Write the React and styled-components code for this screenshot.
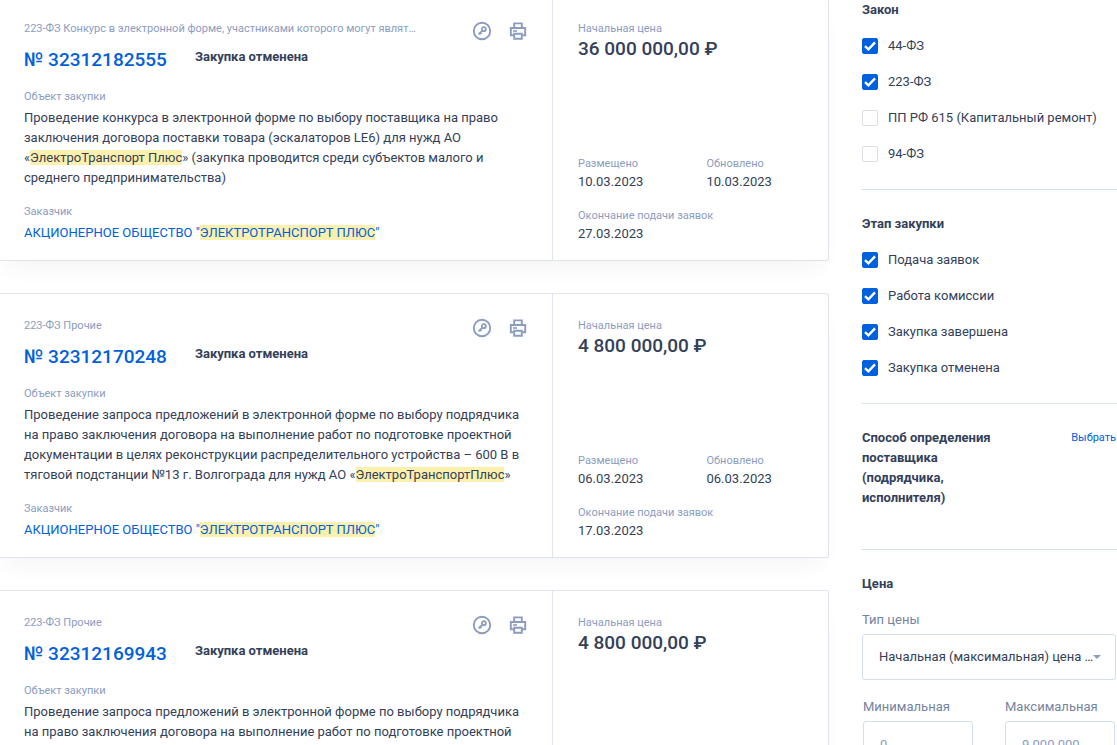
import React from 'react'
import styled, { createGlobalStyle } from 'styled-components'

const cards = [
    {
        type: '223-ФЗ Конкурс в электронной форме, участниками которого могут являться только субъекты малого предпринимательства',
        number: '32312182555',
        status: 'Закупка отменена',
        subject: ['Проведение конкурса в электронной форме по выбору поставщика на право заключения договора поставки товара (эскалаторов LE6) для нужд АО «', 'ЭлектроТранспорт Плюс', '» (закупка проводится среди субъектов малого и среднего предпринимательства)'],
        price: '36 000 000,00 ₽',
        placed: '10.03.2023',
        updated: '10.03.2023',
        deadline: '27.03.2023',
    },
    {
        type: '223-ФЗ Прочие',
        number: '32312170248',
        status: 'Закупка отменена',
        subject: ['Проведение запроса предложений в электронной форме по выбору подрядчика на право заключения договора на выполнение работ по подготовке проектной документации в целях реконструкции распределительного устройства – 600 В в тяговой подстанции №13 г. Волгограда для нужд АО «', 'ЭлектроТранспортПлюс', '»'],
        price: '4 800 000,00 ₽',
        placed: '06.03.2023',
        updated: '06.03.2023',
        deadline: '17.03.2023',
    },
    {
        type: '223-ФЗ Прочие',
        number: '32312169943',
        status: 'Закупка отменена',
        subject: ['Проведение запроса предложений в электронной форме по выбору подрядчика на право заключения договора на выполнение работ по подготовке проектной документации в целях реконструкции распределительного устройства – 600 В в тяговой подстанции №13 г. Волгограда для нужд АО «', 'ЭлектроТранспортПлюс', '»'],
        price: '4 800 000,00 ₽',
        placed: '06.03.2023',
        updated: '06.03.2023',
        deadline: '17.03.2023',
    },
]

const laws = [
    { label: '44-ФЗ', checked: true },
    { label: '223-ФЗ', checked: true },
    { label: 'ПП РФ 615 (Капитальный ремонт)', checked: false },
    { label: '94-ФЗ', checked: false },
]

const stages = [
    { label: 'Подача заявок', checked: true },
    { label: 'Работа комиссии', checked: true },
    { label: 'Закупка завершена', checked: true },
    { label: 'Закупка отменена', checked: true },
]

function KeyIcon() {
    return (
        <svg width="20" height="20" viewBox="0 0 20 20" fill="none" stroke="currentColor">
            <circle cx="10" cy="10" r="8.2" strokeWidth="1.9" />
            <circle cx="11.8" cy="8.2" r="2" strokeWidth="1.8" />
            <path d="M10.2 9.8L6.6 13.4M7.4 11.2L9.4 13.2" strokeWidth="1.8" />
        </svg>
    )
}

function PrintIcon() {
    return (
        <svg width="20" height="20" viewBox="0 0 20 20" fill="none" stroke="currentColor" strokeWidth="1.9">
            <path d="M6.2 7V2.4h7.6V7" />
            <path d="M5.7 14.2H2.8V7h14.4v7.2h-2.9" />
            <path d="M6.2 12.8h7.6v4.9H6.2z" />
            <path d="M5 10h4" strokeWidth="1.6" />
        </svg>
    )
}

function PurchaseCard({ card }) {
    return (
        <Card>
            <CardMain>
                <CardTop>
                    <Caption $clip>{card.type}</Caption>
                    <Actions>
                        <IconButton type="button" aria-label="Электронная подпись"><KeyIcon /></IconButton>
                        <IconButton type="button" aria-label="Печать"><PrintIcon /></IconButton>
                    </Actions>
                </CardTop>
                <NumberRow>
                    <NumberLink href="#">№ {card.number}</NumberLink>
                    <Status>{card.status}</Status>
                </NumberRow>
                <Block>
                    <Caption>Объект закупки</Caption>
                    <Text>{card.subject[0]}<Mark>{card.subject[1]}</Mark>{card.subject[2]}</Text>
                </Block>
                <Block>
                    <Caption>Заказчик</Caption>
                    <CustomerLink href="#">АКЦИОНЕРНОЕ ОБЩЕСТВО "<Mark>ЭЛЕКТРОТРАНСПОРТ ПЛЮС</Mark>"</CustomerLink>
                </Block>
            </CardMain>
            <CardSide>
                <div>
                    <Caption>Начальная цена</Caption>
                    <Price>{card.price}</Price>
                </div>
                <Dates>
                    <DateItem>
                        <Caption>Размещено</Caption>
                        <Text>{card.placed}</Text>
                    </DateItem>
                    <DateItem>
                        <Caption>Обновлено</Caption>
                        <Text>{card.updated}</Text>
                    </DateItem>
                    <DateItem $wide>
                        <Caption>Окончание подачи заявок</Caption>
                        <Text>{card.deadline}</Text>
                    </DateItem>
                </Dates>
            </CardSide>
        </Card>
    )
}

function CheckGroup({ title, items }) {
    return (
        <Section>
            <Title>{title}</Title>
            <CheckList>
                {items.map((item) => (
                    <CheckLabel key={item.label}>
                        <Checkbox type="checkbox" defaultChecked={item.checked} />
                        <CheckMark viewBox="0 0 16 16">
                            <path d="M3 8.2l3.4 3.2 6.6-7" />
                        </CheckMark>
                        {item.label}
                    </CheckLabel>
                ))}
            </CheckList>
        </Section>
    )
}

function App() {
    return (
        <>
            <GlobalStyle />
            <Page>
                <Results>
                    {cards.map((card) => <PurchaseCard key={card.number} card={card} />)}
                </Results>
                <Sidebar>
                    <CheckGroup title="Закон" items={laws} />
                    <CheckGroup title="Этап закупки" items={stages} />
                    <Section>
                        <TitleRow>
                            <Title $narrow>Способ определения поставщика (подрядчика, исполнителя)</Title>
                            <ChooseButton type="button">Выбрать</ChooseButton>
                        </TitleRow>
                    </Section>
                    <Section>
                        <Title>Цена</Title>
                        <Field>
                            <FieldLabel htmlFor="price-type">Тип цены</FieldLabel>
                            <SelectBox>
                                <Select id="price-type">
                                    <option>Начальная (максимальная) цена …</option>
                                </Select>
                                <Arrow viewBox="0 0 8 4"><path d="M0 0h8L4 4z" /></Arrow>
                            </SelectBox>
                        </Field>
                        <FieldRow>
                            <Field>
                                <FieldLabel htmlFor="price-min">Минимальная</FieldLabel>
                                <Input id="price-min" placeholder="0" />
                            </Field>
                            <Field>
                                <FieldLabel htmlFor="price-max">Максимальная</FieldLabel>
                                <Input id="price-max" placeholder="9 000 000" />
                            </Field>
                        </FieldRow>
                    </Section>
                </Sidebar>
            </Page>
        </>
    )
}

export default App;


const GlobalStyle = createGlobalStyle`
:root {
    --text: #334059;
    --muted: #8c9cbf;
    --blue: #0060dd;
    --line: #dfe3ef;
}

* {
    box-sizing: border-box;
}

html {
    scrollbar-width: none;
}

body {
    margin: 0;
    overflow-x: hidden;
    background: #fff;
    color: var(--text);
    font: 13px/20px Roboto, "Liberation Sans", sans-serif;
}

button, input, select {
    font: inherit;
}

a {
    text-decoration: none;
}
`;

const Page = styled.div`
display: grid;
grid-template-columns: minmax(0, 1fr) 256px;
gap: 32px;
align-items: start;
`;

// Search results

const Results = styled.main`
display: grid;
gap: 32px;
margin-top: -4px;
padding-bottom: 32px;
`;

const Card = styled.article`
display: grid;
grid-template-columns: 2fr 1fr;
border: 1px solid var(--line);
border-left: 0;
border-radius: 0 3px 3px 0;
background: #fff;
box-shadow: 0 14px 20px -8px rgba(60, 70, 110, 0.06);
`;

const CardMain = styled.div`
padding: 24px 24px 17px;
min-width: 0;
`;

const CardSide = styled.div`
display: flex;
flex-direction: column;
justify-content: space-between;
padding: 24px 25px 16px;
border-left: 1px solid var(--line);
`;

const CardTop = styled.div`
display: flex;
justify-content: space-between;
gap: 56px;
`;

const Caption = styled.div`
color: var(--muted);
font-size: 11px;
line-height: 16px;
${(props) => props.$clip && `
    overflow: hidden;
    text-overflow: ellipsis;
    white-space: nowrap;
`}
`;

const Actions = styled.div`
display: flex;
gap: 16px;
`;

const IconButton = styled.button`
display: block;
width: 20px;
height: 20px;
padding: 0;
border: 0;
background: none;
color: var(--muted);
cursor: pointer;

svg {
    display: block;
}
`;

const NumberRow = styled.div`
display: flex;
align-items: flex-start;
gap: 28px;
margin: 6px 0 16px;
`;

const NumberLink = styled.a`
color: var(--blue);
font-size: 19px;
font-weight: 500;
line-height: 26px;
`;

const Status = styled.span`
font-weight: 700;
`;

const Block = styled.div`
display: flex;
flex-direction: column;
align-items: flex-start;
gap: 3px;

& + & {
    margin-top: 16px;
}
`;

const Text = styled.div`
font-size: 13px;
line-height: 20px;
`;

const Mark = styled.mark`
background: #fbf0ac;
color: inherit;
`;

const CustomerLink = styled.a`
color: var(--blue);
`;

const Price = styled.div`
font-size: 19px;
font-weight: 500;
line-height: 24px;
white-space: nowrap;
`;

const Dates = styled.div`
display: grid;
grid-template-columns: 1fr 1fr;
gap: 16px 32px;
`;

const DateItem = styled.div`
${(props) => props.$wide && 'grid-column: 1 / 3;'}
`;

// Filters

const Sidebar = styled.aside`
min-width: 0;
`;

const Section = styled.section`
padding: 24px 1px 25px;

&:first-child {
    padding-top: 0;
}

& + & {
    border-top: 1px solid #d8e2ee;
}
`;

const Title = styled.h2`
margin: 0 0 16px;
font-size: 13px;
font-weight: 700;
line-height: 20px;
${(props) => props.$narrow && 'max-width: 144px;'}
`;

const TitleRow = styled.div`
display: flex;
justify-content: space-between;
align-items: flex-start;
`;

const ChooseButton = styled.button`
padding: 0;
border: 0;
background: none;
color: var(--blue);
font-size: 11px;
line-height: 20px;
cursor: pointer;
`;

const CheckList = styled.div`
display: grid;
gap: 16px;
`;

const CheckLabel = styled.label`
display: grid;
grid-template-columns: 16px 1fr;
align-items: center;
column-gap: 10px;
`;

const Checkbox = styled.input`
appearance: none;
grid-area: 1 / 1;
width: 16px;
height: 16px;
margin: 0;
border: 1px solid #dce0e6;
border-radius: 2px;
background: #fff;

&:checked {
    border-color: var(--blue);
    background: var(--blue);
}
`;

const CheckMark = styled.svg`
grid-area: 1 / 1;
width: 16px;
height: 16px;
fill: none;
stroke: #fff;
stroke-width: 2.4;
pointer-events: none;
`;

const Field = styled.div`
display: flex;
flex-direction: column;
gap: 4px;
min-width: 0;
`;

const FieldLabel = styled.label`
color: #74839f;
`;

const FieldRow = styled.div`
display: grid;
grid-template-columns: 1fr 1fr;
gap: 32px;
margin-top: 17px;
padding: 0 1px;
`;

const SelectBox = styled.div`
display: grid;
grid-template-columns: 1fr 23px;
align-items: center;
`;

const Select = styled.select`
appearance: none;
grid-area: 1 / 1 / 2 / 3;
width: 100%;
height: 46px;
padding: 0 16px;
border: 1px solid #d3dfee;
border-radius: 3px;
background: #fff;
color: var(--text);
text-overflow: ellipsis;
`;

const Arrow = styled.svg`
grid-area: 1 / 2;
width: 8px;
height: 4px;
fill: var(--muted);
pointer-events: none;
`;

const Input = styled.input`
width: 100%;
height: 46px;
padding: 0 16px;
border: 1px solid #d3dfee;
border-radius: 3px;
background: #fff;
color: var(--text);

&::placeholder {
    color: var(--muted);
}
`;
